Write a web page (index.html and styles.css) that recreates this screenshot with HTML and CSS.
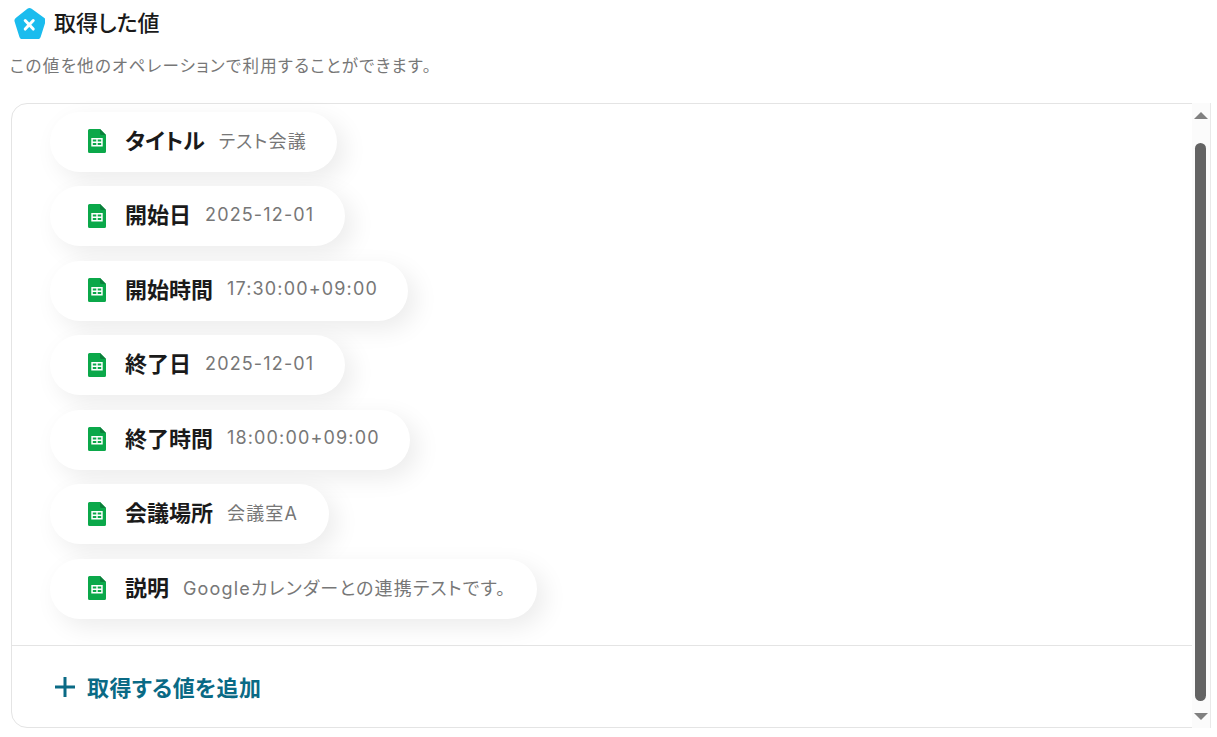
FILE: index.html
```html
<!DOCTYPE html>
<html lang="ja">
<head>
    <meta charset="UTF-8">
    <meta name="viewport" content="width=device-width, initial-scale=1.0">
    <title>取得した値</title>
    <link rel="stylesheet" href="styles.css">
</head>
<body>
    <svg width="0" height="0" class="defs">
        <symbol id="sheet" viewBox="0 0 18 24">
            <path d="M1.500 0H12l6 6v16.500a1.500 1.500 0 0 1-1.500 1.500h-15A1.500 1.500 0 0 1 0 22.500V1.500A1.500 1.500 0 0 1 1.500 0z" fill="#0ba84a"/>
            <path d="M12 0l6 6h-4.500A1.500 1.500 0 0 1 12 4.500z" fill="#0a7f3a"/>
            <path d="M3.300 9h11.400v8.500H3.300zM4.800 10.400v2.200h3.500v-2.200zM9.700 10.400v2.200h3.500v-2.200zM4.800 13.900v2.200h3.500v-2.200zM9.700 13.900v2.200h3.500v-2.200z" fill="#fff" fill-rule="evenodd"/>
        </symbol>
    </svg>

    <div class="head">
        <svg class="logo" width="31" height="31" viewBox="1.500 0.500 29 29">
            <path d="M14 1.300a3.400 3.400 0 0 1 4 0l11.600 8.300a3.400 3.400 0 0 1 1.300 3.800l-4.400 14a3.400 3.400 0 0 1-3.200 2.400H9.700a3.400 3.400 0 0 1-3.200-2.400l-4.400-14a3.400 3.400 0 0 1 1.300-3.800z" fill="#1bbcee"/>
            <path d="M12 12.200l7.500 8M19.500 12.200l-7.500 8" stroke="#fff" stroke-width="2.800" stroke-linecap="round"/>
        </svg>
        <h1>取得した値</h1>
    </div>
    <p class="sub">この値を他のオペレーションで利用することができます。</p>

    <div class="panel">
        <div class="list">
            <div class="pill"><svg class="icon"><use href="#sheet"/></svg><b>タイトル</b><span>テスト会議</span></div>
            <div class="pill"><svg class="icon"><use href="#sheet"/></svg><b>開始日</b><span>2025-12-01</span></div>
            <div class="pill"><svg class="icon"><use href="#sheet"/></svg><b>開始時間</b><span>17:30:00+09:00</span></div>
            <div class="pill"><svg class="icon"><use href="#sheet"/></svg><b>終了日</b><span>2025-12-01</span></div>
            <div class="pill"><svg class="icon"><use href="#sheet"/></svg><b>終了時間</b><span>18:00:00+09:00</span></div>
            <div class="pill"><svg class="icon"><use href="#sheet"/></svg><b>会議場所</b><span>会議室A</span></div>
            <div class="pill"><svg class="icon"><use href="#sheet"/></svg><b>説明</b><span>Googleカレンダーとの連携テストです。</span></div>
        </div>
        <div class="add">
            <svg width="20" height="20" viewBox="0 0 20 20"><path d="M10 0v20M0 10h20" stroke="#0a6a85" stroke-width="3"/></svg>
            <span>取得する値を追加</span>
        </div>
        <div class="scrollbar">
            <i class="arrow up"></i>
            <i class="thumb"></i>
            <i class="arrow down"></i>
        </div>
    </div>
</body>
</html>
```

FILE: styles.css
```css
html, body { height: 100%; }
body { margin: 0; padding: 8px 6px 0 11px; box-sizing: border-box; background: #fff; font-family: Inter, "Noto Sans CJK JP", sans-serif; overflow: hidden; font-feature-settings: "palt"; }
.defs { position: absolute; }
.head { display: flex; align-items: center; height: 31px; padding-left: 3px; gap: 9px; }
h1 { margin: 0; font-size: 22px; font-weight: 500; color: #1a1a1a; line-height: 31px; }
.sub { margin: 15px 0 0 -1px; font-size: 16.500px; line-height: 24px; letter-spacing: 1.300px; color: #777; height: 24px; }
.panel { position: relative; display: flex; flex-direction: column; box-sizing: border-box; height: 625px; margin-top: 25px; border: 1px solid #e4e4e4; border-radius: 16px; }
.list { flex: 1; display: flex; flex-direction: column; align-items: flex-start; gap: 14.500px; padding: 7.750px 0 0 38px; }
.pill { display: flex; align-items: center; height: 60px; padding: 0 30.500px 0 38px; background: #fff; border-radius: 30px; box-shadow: 8px 8px 24px rgba(0, 0, 0, .08); }
.icon { width: 18px; height: 24px; margin-right: 19px; margin-bottom: 1px; flex: none; }
.pill b { font-size: 22px; font-weight: 700; color: #1a1a1a; margin: 0 14px 6px 0; }
.pill span { font-size: 18px; color: #777; letter-spacing: 1.150px; white-space: nowrap; margin-bottom: 4px; }
.add { display: flex; align-items: center; height: 82px; box-sizing: border-box; padding-left: 43px; gap: 12px; border-top: 1px solid #e4e4e4; margin-right: 18px; }
.add span { font-size: 22px; font-weight: 700; letter-spacing: .4px; color: #0a6a85; margin-bottom: 2px; }
.scrollbar { position: absolute; top: -1px; right: -1px; bottom: -1px; width: 19px; box-sizing: border-box; background: #fbfbfb; border-right: 1px solid #e9e9e9; display: flex; flex-direction: column; align-items: center; padding: 9px 1px 8px 0; }
.thumb { flex: 1; width: 11px; margin: 24px 0 12px; border-radius: 6px; background: #636363; }
.arrow { width: 0; height: 0; border-left: 7px solid transparent; border-right: 7px solid transparent; }
.arrow.up { border-bottom: 7px solid #808080; }
.arrow.down { border-top: 7px solid #808080; }
```
